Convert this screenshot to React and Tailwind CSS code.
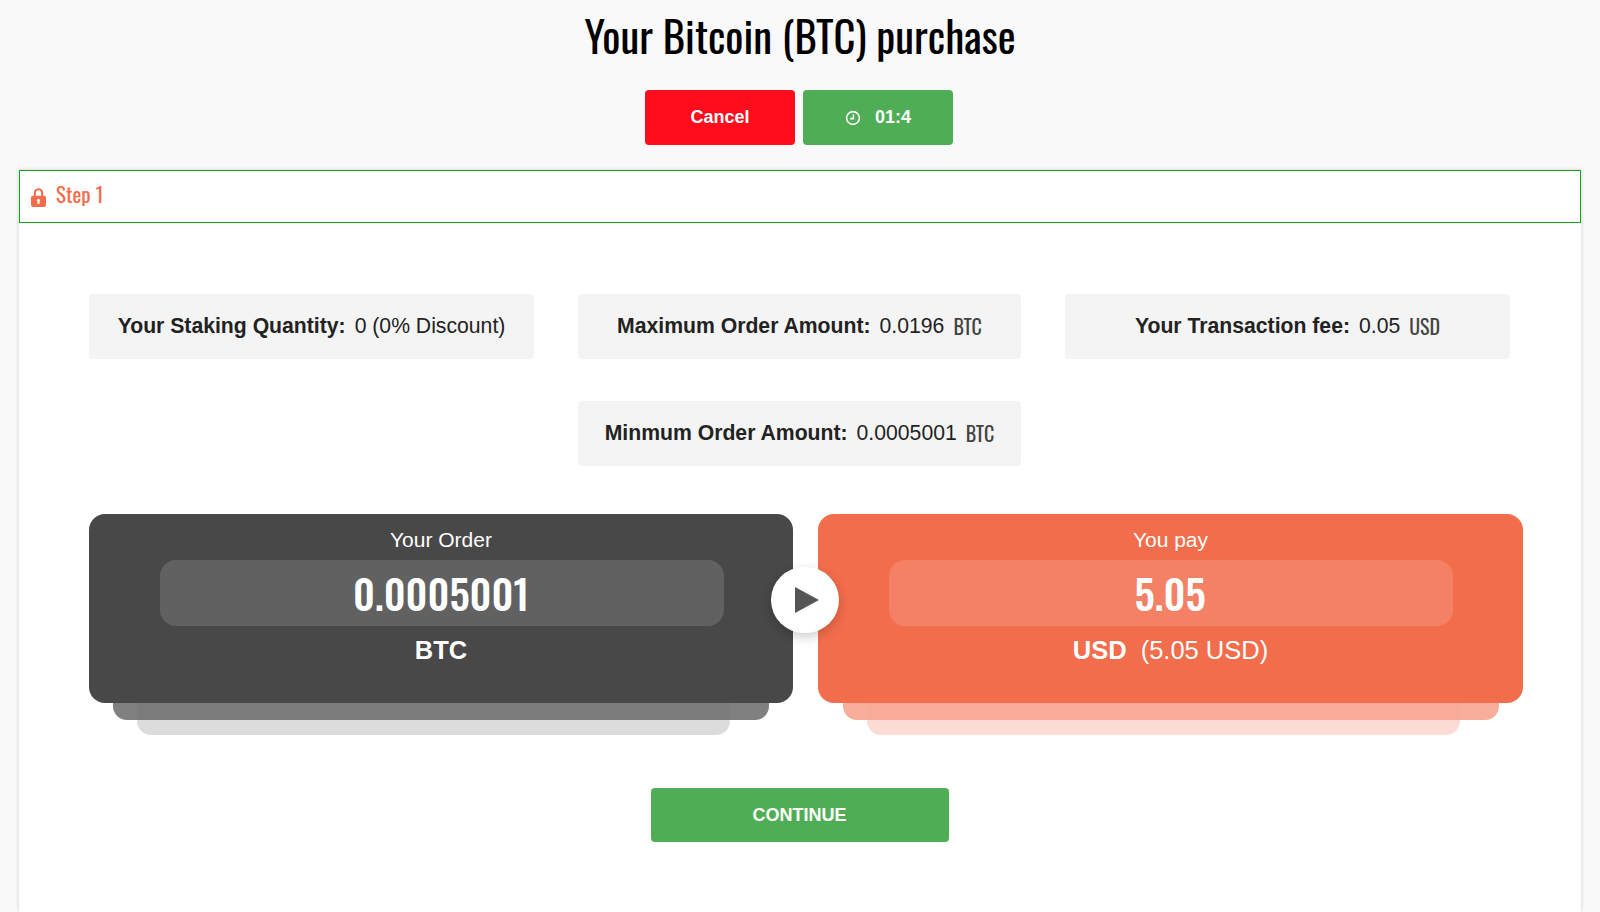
import React from "react";

const narrow = "font-['Oswald','Liberation_Sans_Narrow','Liberation_Sans',sans-serif]";

function Info({ label, value, unit, width = "w-[445px]" }) {
  return (
    <div className={`${width} h-[65px] bg-[#f4f4f4] rounded-[4px] flex items-center justify-center text-[21.2px] text-[#222] pb-[2px]`}>
      <b className="font-bold mr-[9px]">{label}</b>
      <span>{value}</span>
      {unit && <span className={`${narrow} ml-[9px] text-[20px] text-[#444]`}>{unit}</span>}
    </div>
  );
}

function Panel({ title, value, children, width, bg, inner, innerPos, shadow1, shadow2 }) {
  return (
    <div className={`relative ${width} h-[189px]`}>
      <div className={`absolute top-[100px] w-[593px] h-[121px] rounded-[14px] ${shadow2}`} />
      <div className={`absolute top-[100px] w-[656px] h-[106px] rounded-[14px] ${shadow1}`} />
      <div className={`relative h-[189px] rounded-[16px] ${bg} text-white flex flex-col items-center pt-[13px]`}>
        <div className="text-[21px] leading-[26px]">{title}</div>
        <div className={`mt-[7px] ${innerPos} w-[564px] h-[66px] rounded-[16px] ${inner} flex items-center justify-center ${narrow} text-[41px] font-medium leading-none pb-[2px] pr-[2px]`}>
          {value}
        </div>
        <div className="mt-[10px] text-[25.5px] leading-[28px]">{children}</div>
      </div>
    </div>
  );
}

export default function App() {
  return (
    <div className="w-full h-[912px] overflow-hidden bg-[#f9f9f9] font-['Liberation_Sans',Arial,sans-serif]">
      <h1 className={`${narrow} text-center text-[42.7px] leading-[54px] pt-[8px] pb-[3px] text-black font-normal`}>
        Your Bitcoin (BTC) purchase
      </h1>
      <div className="flex justify-center gap-[8px] mt-[25px] pr-[2px]">
        <button className="w-[150px] h-[55px] rounded-[4px] bg-[#ff0d1c] text-white font-bold text-[18px]">Cancel</button>
        <button className="w-[150px] h-[55px] rounded-[4px] bg-[#4fae55] text-white font-bold text-[18px] flex items-center justify-center gap-[14px]">
          <svg width="16" height="16" viewBox="0 0 16 16" fill="none" stroke="white" strokeWidth="1.6">
            <circle cx="8" cy="8" r="6.4" />
            <path d="M8.4 4.2V8.6H5" />
          </svg>
          01:4
        </button>
      </div>
      <div className="mt-[25px] mx-[19px] h-[742px] bg-white shadow-[0_0_4px_rgba(0,0,0,0.18)]">
        <div className="h-[53px] border border-[#0da51c] flex items-center pl-[11px] gap-[10px]">
          <svg width="15" height="21" viewBox="0 0 16 22" fill="#f36d4b" className="mt-[1px]">
            <path fillRule="evenodd" d="M3 9V6a5 5 0 0 1 10 0v3h1a2 2 0 0 1 2 2v8a2 2 0 0 1-2 2H2a2 2 0 0 1-2-2v-8a2 2 0 0 1 2-2h1Zm2.2 0h5.6V6a2.8 2.8 0 0 0-5.6 0v3ZM8 12.5a1.7 1.7 0 0 0-1 3.1V18h2v-2.4a1.7 1.7 0 0 0-1-3.1Z" />
          </svg>
          <span className={`${narrow} text-[21px] text-[#f36d4b] pb-[6px]`}>Step 1</span>
        </div>
        <div className="pl-[70px] pr-[71px] pt-[71px]">
          <div className="flex justify-between">
            <Info label="Your Staking Quantity:" value="0 (0% Discount)" />
            <Info label="Maximum Order Amount:" value="0.0196" unit="BTC" width="w-[443px]" />
            <Info label="Your Transaction fee:" value="0.05" unit="USD" />
          </div>
          <div className="flex justify-center mt-[42px]">
            <Info label="Minmum Order Amount:" value="0.0005001" unit="BTC" width="w-[443px]" />
          </div>
          <div className="relative flex gap-[25px] mt-[48px] w-[1434px]">
            <Panel title="Your Order" value="0.0005001" width="w-[704px]" innerPos="ml-[2px]" bg="bg-[#484848]" inner="bg-[#616161]" shadow1="left-[24px] bg-[rgba(112,112,112,0.886)]" shadow2="left-[48px] bg-[#dcdcdc]">
              <b>BTC</b>
            </Panel>
            <Panel title="You pay" value="5.05" width="w-[705px]" innerPos="ml-[1px]" bg="bg-[#f26d4b]" inner="bg-[#f48165]" shadow1="left-[25px] bg-[rgba(247,165,144,0.9)]" shadow2="left-[49px] bg-[#fcdcd5]">
              <b>USD</b>
              <span className="ml-[14px]">(5.05 USD)</span>
            </Panel>
            <div className="absolute left-[682px] top-[53px] w-[68px] h-[66px] rounded-full bg-white flex items-center justify-center shadow-[0_4px_12px_rgba(0,0,0,0.2)]">
              <svg width="26" height="28" viewBox="0 0 26 28" className="ml-[4px]">
                <path d="M1 1L25 14L1 27Z" fill="#555" />
              </svg>
            </div>
          </div>
          <div className="flex justify-center mt-[85px]">
            <button className="w-[298px] h-[54px] rounded-[4px] bg-[#4fae55] text-white font-bold text-[18px]">CONTINUE</button>
          </div>
        </div>
      </div>
    </div>
  );
}
